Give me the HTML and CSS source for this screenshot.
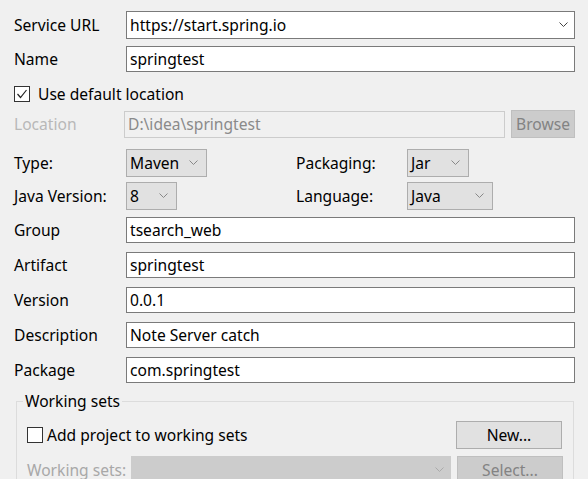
FILE: index.html
```html
<!DOCTYPE html>
<html>
<head>
<meta charset="utf-8">
<link rel="stylesheet" href="styles.css">
</head>
<body>
<div class="form">
  <div class="row r-url">
    <span class="lbl">Service URL</span>
    <div class="field combo-edit">https://start.spring.io<svg class="chev dark" width="9" height="6" viewBox="0 0 9 6"><path d="M0.5 0.5 L4.5 4.5 L8.5 0.5" fill="none" stroke="#444" stroke-width="1"/></svg></div>
  </div>
  <div class="row r-name">
    <span class="lbl">Name</span>
    <div class="field text">springtest</div>
  </div>
  <div class="row r-check">
    <span class="box checked"><svg width="14" height="14" viewBox="0 0 14 14"><path d="M2.5 7 L5.5 10.5 L11.5 3" fill="none" stroke="#222" stroke-width="1.2"/></svg></span>
    <span class="check-label">Use default location</span>
  </div>
  <div class="row r-loc">
    <span class="lbl disabled">Location</span>
    <div class="field dis-text">D:\idea\springtest</div>
    <div class="btn dis-btn browse">Browse</div>
  </div>
  <div class="row r-type">
    <span class="lbl">Type:</span>
    <div class="drop w-maven">Maven<svg class="chev" width="9" height="6" viewBox="0 0 9 6"><path d="M0.5 0.5 L4.5 4.5 L8.5 0.5" fill="none" stroke="#888" stroke-width="1"/></svg></div>
    <span class="lbl2">Packaging:</span>
    <div class="drop w-jar">Jar<svg class="chev" width="9" height="6" viewBox="0 0 9 6"><path d="M0.5 0.5 L4.5 4.5 L8.5 0.5" fill="none" stroke="#888" stroke-width="1"/></svg></div>
  </div>
  <div class="row r-java">
    <span class="lbl">Java Version:</span>
    <div class="drop w-8 focus">8<svg class="chev" width="9" height="6" viewBox="0 0 9 6"><path d="M0.5 0.5 L4.5 4.5 L8.5 0.5" fill="none" stroke="#888" stroke-width="1"/></svg></div>
    <span class="lbl2 lbl2-java">Language:</span>
    <div class="drop w-java">Java<svg class="chev" width="9" height="6" viewBox="0 0 9 6"><path d="M0.5 0.5 L4.5 4.5 L8.5 0.5" fill="none" stroke="#888" stroke-width="1"/></svg></div>
  </div>
  <div class="row r-group">
    <span class="lbl">Group</span>
    <div class="field text">tsearch_web</div>
  </div>
  <div class="row r-next">
    <span class="lbl">Artifact</span>
    <div class="field text">springtest</div>
  </div>
  <div class="row r-next">
    <span class="lbl">Version</span>
    <div class="field text">0.0.1</div>
  </div>
  <div class="row r-next">
    <span class="lbl">Description</span>
    <div class="field text">Note Server catch</div>
  </div>
  <div class="row r-next">
    <span class="lbl">Package</span>
    <div class="field text">com.springtest</div>
  </div>
  <fieldset class="wsets">
    <legend>Working sets</legend>
    <div class="ws-row ws-add">
      <span class="box"></span>
      <span class="check-label ws-check">Add project to working sets</span>
      <div class="btn new-btn">New...</div>
    </div>
    <div class="ws-row ws-sel">
      <span class="ws-lbl">Working sets:</span>
      <div class="ws-combo"><svg class="chev" width="9" height="6" viewBox="0 0 9 6"><path d="M0.5 0.5 L4.5 4.5 L8.5 0.5" fill="none" stroke="#aaa" stroke-width="1"/></svg></div>
      <div class="btn dis-btn sel-btn">Select...</div>
    </div>
  </fieldset>
</div>
</body>
</html>
```
FILE: styles.css
```css
html, body {
  margin: 0;
  padding: 0;
  background: #f0f0f0;
  width: 588px;
  height: 479px;
  overflow: hidden;
}
body {
  font-family: "Noto Sans", "Open Sans", sans-serif;
  font-size: 15.6px;
  line-height: 20px;
  color: #000;
}
.form {
  display: flex;
  flex-direction: column;
  padding-left: 14px;
}
.row {
  display: flex;
  align-items: center;
}
.lbl {
  width: 112px;
  flex: none;
  white-space: nowrap;
}
.lbl.disabled { color: #b8b8b8; }
.field {
  box-sizing: border-box;
  width: 449px;
  background: #fff;
  border: 1px solid #7a7a7a;
  padding-left: 3px;
  display: flex;
  align-items: center;
  white-space: nowrap;
}
.r-url { margin-top: 11px; height: 28px; }
.r-url .field { height: 28px; }
.chev { margin-left: auto; flex: none; }
.combo-edit .chev { margin-right: 6px; }
.r-name { margin-top: 7px; height: 26px; }
.r-name .field { height: 26px; }
.r-check { margin-top: 13px; height: 18px; }
.box {
  box-sizing: border-box;
  width: 16px;
  height: 16px;
  border: 1px solid #333;
  background: #fff;
  display: flex;
  align-items: center;
  justify-content: center;
  flex: none;
}
.check-label { margin-left: 8px; white-space: nowrap; }
.r-loc { margin-top: 7px; height: 28px; }
.r-loc .lbl { width: 110px; }
.dis-text {
  width: 381px;
  height: 27px;
  background: #f0f0f0;
  border-color: #cccccc;
  color: #8a8a8a;
  padding-left: 3px;
}
.btn {
  box-sizing: border-box;
  display: flex;
  align-items: center;
  justify-content: center;
  border: 1px solid #adadad;
  background: #e1e1e1;
  flex: none;
}
.dis-btn {
  background: #cccccc;
  border-color: #bfbfbf;
  color: #838383;
}
.browse {
  margin-left: 6px;
  width: 64px;
  height: 28px;
}
.drop {
  box-sizing: border-box;
  height: 28px;
  background: #e1e1e1;
  border: 1px solid #adadad;
  display: flex;
  align-items: center;
  padding-left: 3px;
  padding-right: 8px;
  flex: none;
}
.r-type { margin-top: 11px; height: 28px; }
.r-java { margin-top: 5px; height: 28px; }
.w-maven { width: 81px; }
.w-jar { width: 62px; }
.w-8 { width: 51px; }
.w-java { width: 86px; }
.lbl2 {
  margin-left: 89px;
  width: 111px;
  flex: none;
  white-space: nowrap;
}
.lbl2-java { margin-left: 119px; }
.r-group { margin-top: 7px; height: 26px; }
.r-group .field, .r-next .field { height: 26px; }
.r-next { margin-top: 9px; height: 26px; }
.wsets {
  margin: 8px 0 0 2px;
  width: 558px;
  box-sizing: border-box;
  border: 1px solid #dcdcdc;
  border-bottom: none;
  padding: 0 0 0 10px;
  height: 100px;
}
.wsets legend {
  padding: 0 2px;
  margin-left: -4px;
}
.ws-row {
  display: flex;
  align-items: center;
}
.ws-add { margin-top: 10px; height: 28px; }
.ws-check { margin-left: 4px; }
.new-btn {
  margin-left: auto;
  margin-right: 11px;
  width: 106px;
  height: 28px;
}
.ws-sel { margin-top: 7px; height: 28px; }
.ws-lbl {
  color: #a8a8a8;
  width: 104px;
  flex: none;
  white-space: nowrap;
}
.ws-combo {
  box-sizing: border-box;
  width: 320px;
  height: 28px;
  background: #cccccc;
  display: flex;
  align-items: center;
  padding-right: 7px;
}
.sel-btn {
  margin-left: 6px;
  width: 106px;
  height: 28px;
}
```
